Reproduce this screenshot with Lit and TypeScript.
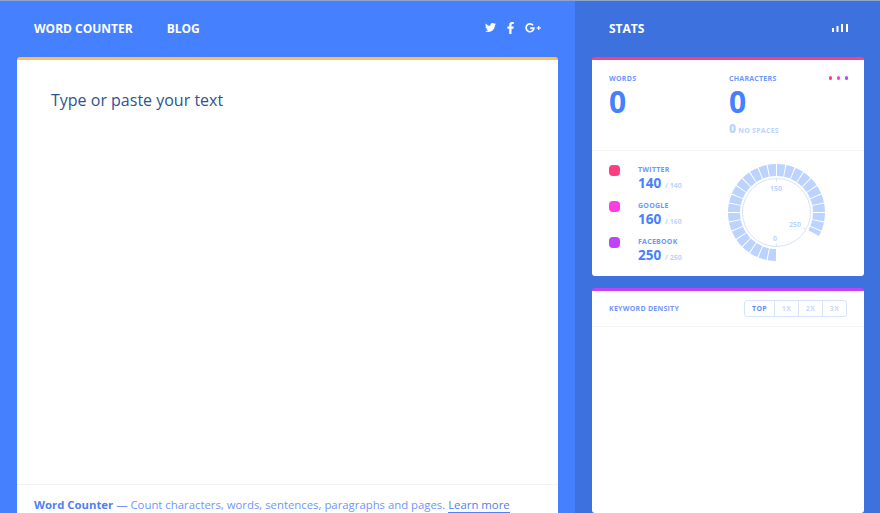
import { LitElement, html, css, svg } from "lit";
import { customElement } from "lit/decorators.js";

const CX = 48.5, CY = 48.5;
function pt(r: number, deg: number) {
  const a = (deg * Math.PI) / 180;
  return `${(CX + r * Math.sin(a)).toFixed(2)} ${(CY - r * Math.cos(a)).toFixed(2)}`;
}
const segs = Array.from({ length: 27 }, (_, i) => {
  const a = 180 + i * 11.25 + 0.65;
  const b = Math.min(180 + (i + 1) * 11.25 - 0.65, 479);
  return `M${pt(48.5, a)}A48.5 48.5 0 0 1 ${pt(48.5, b)}L${pt(36.5, b)}A36.5 36.5 0 0 0 ${pt(36.5, a)}Z`;
});

@customElement("app-root")
export class AppRoot extends LitElement {
  static styles = css`
    :host { display: block; height: 100vh; overflow: hidden; font-family: "Open Sans", sans-serif; }
    .page { display: grid; grid-template-columns: 575px 305px; height: 513px; overflow: hidden; border-top: 1px solid #8fa5cc; box-sizing: border-box; }
    .left { background: #4580ff; padding: 0 17px; display: flex; flex-direction: column; }
    .right { background: #3d72de; padding: 0 16px 0 17px; display: flex; flex-direction: column; }
    .nav { height: 56px; flex: none; display: flex; align-items: center; padding: 0 17px; color: #fff; font-weight: 700; font-size: 12px; box-sizing: border-box; padding-bottom: 2px; }
    .nav .blog { margin-left: 34px; }
    .social { margin-left: auto; display: flex; align-items: center; gap: 11px; }
    .social svg { display: block; fill: #fff; }
    .editor { flex: 1; background: #fff; border-top: 3px solid #ffc04d; border-radius: 3px 3px 0 0; display: flex; flex-direction: column; min-height: 0; }
    .prompt { flex: 1; padding: 29px 34px 0; font-size: 16px; line-height: 22px; color: #2c5490; }
    .foot { flex: none; height: 17px; border-top: 1px solid #f1f3f7; padding: 11px 17px 0; font-size: 11.35px; line-height: 18px; color: #6f96ff; white-space: nowrap; }
    .foot b { color: #4f80f5; font-weight: 700; }
    .foot a { color: #4f80f5; text-decoration: none; border-bottom: 1px solid #4f80f5; }
    .stats-head svg { margin-left: auto; display: block; fill: #fff; }
    .stats-head { padding: 0 16px 2px 17px; }
    .card { background: #fff; border-radius: 3px; border-top: 3px solid #ff3d80; }
    .top { height: 76px; position: relative; display: grid; grid-template-columns: 120px 1fr; padding: 14px 17px 0; box-sizing: content-box; border-bottom: 1px solid #f3f5f9; }
    .label { font-size: 7px; line-height: 10px; font-weight: 700; letter-spacing: 0.25px; color: #6f96ff; text-transform: uppercase; }
    .big { font-size: 30px; line-height: 36px; font-weight: 700; color: #4580ff; }
    .nospace { margin-top: 2px; font-size: 7px; line-height: 14px; font-weight: 700; letter-spacing: 0.25px; color: #bcd3ff; display: flex; align-items: baseline; gap: 2px; }
    .nospace b { font-size: 12px; }
    .dots { position: absolute; top: 16px; right: 16px; display: flex; gap: 4.5px; }
    .dots i { width: 3.500px; height: 3.500px; border-radius: 50%; }
    .mid { height: 125px; display: flex; box-sizing: border-box; padding: 14px 16px 0 17px; }
    .legend { width: 119px; flex: none; display: flex; flex-direction: column; gap: 6px; }
    .row { display: flex; height: 30px; }
    .swatch { width: 11px; height: 11px; border-radius: 4px; margin: 0 18px 0 0; flex: none; }
    .row .val { font-size: 13.5px; line-height: 18px; font-weight: 700; color: #4580ff; white-space: nowrap; margin-top: -1px; }
    .row .val small { font-size: 7px; color: #bcd3ff; margin-left: 2px; font-weight: 700; }
    .gauge { display: block; margin-top: -1px; }
    .gauge text { font-size: 7px; font-weight: 700; fill: #bcd3ff; text-anchor: middle; }
    .second { margin-top: 12px; flex: 1; border-top-color: #c044f5; }
    .kd { height: 36px; box-sizing: border-box; display: flex; align-items: center; justify-content: space-between; padding: 0 17px; border-bottom: 1px solid #f3f5f9; }
    .tabs { display: flex; border: 1px solid #d5e3ff; border-radius: 3px; height: 15px; }
    .tabs span { font-size: 7px; line-height: 15px; font-weight: 700; letter-spacing: .3px; color: #c6d9ff; width: 23px; text-align: center; border-left: 1px solid #d5e3ff; }
    .tabs span:first-child { border-left: 0; width: 29px; color: #5f8df5; }
  `;

  render() {
    const rows = [
      ["TWITTER", "140", "140", "#ff3d80"],
      ["GOOGLE", "160", "160", "#ff3de0"],
      ["FACEBOOK", "250", "250", "#c044f5"],
    ];
    return html`<div class="page">
      <section class="left">
        <nav class="nav">
          <span>WORD COUNTER</span><span class="blog">BLOG</span>
          <span class="social">
            <svg width="11" height="10" viewBox="0 0 24 21"><path transform="translate(0 -2.500)" d="M23.953 4.57a10 10 0 01-2.825.775 4.958 4.958 0 002.163-2.723c-.951.555-2.005.959-3.127 1.184a4.92 4.92 0 00-8.384 4.482C7.69 8.095 4.067 6.13 1.64 3.162a4.822 4.822 0 00-.666 2.475c0 1.71.87 3.213 2.188 4.096a4.904 4.904 0 01-2.228-.616v.06a4.923 4.923 0 003.946 4.827 4.996 4.996 0 01-2.212.085 4.936 4.936 0 004.604 3.417 9.867 9.867 0 01-6.102 2.105c-.39 0-.779-.023-1.17-.067a13.995 13.995 0 007.557 2.209c9.053 0 13.998-7.496 13.998-13.985 0-.21 0-.42-.015-.63A9.935 9.935 0 0024 4.59z"/></svg>
            <svg width="7" height="12" viewBox="0 0 14 24"><path d="M13.500 4.200h-2.600C9.600 4.200 9 4.800 9 6v3h4.400l-.6 4.400H9V24H4.500V13.400H.7V9h3.800V5.600C4.500 2 6.800 0 10 0c1.500 0 2.800.1 3.500.2z"/></svg>
            <svg width="16" height="10" viewBox="0 0 16 10"><path d="M8 2.300A3.900 3.900 0 1 0 8.900 5.200H5.200" fill="none" stroke="#fff" stroke-width="1.700"/><path d="M11.500 5h4.500M13.750 2.900v4.200" fill="none" stroke="#fff" stroke-width="1.200"/></svg>
          </span>
        </nav>
        <div class="editor">
          <div class="prompt">Type or paste your text</div>
          <div class="foot"><b>Word Counter</b> — Count characters, words, sentences, paragraphs and pages. <a>Learn more</a></div>
        </div>
      </section>
      <section class="right">
        <nav class="nav stats-head">
          <span>STATS</span>
          <svg width="16" height="8" viewBox="0 0 16 8"><rect x="0" y="4" width="2" height="4"/><rect x="4.500" y="2" width="2" height="6"/><rect x="9" y="0" width="2" height="8"/><rect x="14" y="0" width="2" height="8"/></svg>
        </nav>
        <div class="card">
          <div class="top">
            <div>
              <div class="label">Words</div>
              <div class="big">0</div>
            </div>
            <div>
              <div class="label">Characters</div>
              <div class="big">0</div>
              <div class="nospace"><b>0</b> NO SPACES</div>
            </div>
            <div class="dots">
              <i style="background:#ff3d80"></i><i style="background:#ff3de0"></i><i style="background:#c044f5"></i>
            </div>
          </div>
          <div class="mid">
            <div class="legend">
              ${rows.map(
                (r) => html`<div class="row">
                  <i class="swatch" style="background:${r[3]}"></i>
                  <div><div class="label">${r[0]}</div><div class="val">${r[1]}<small> / ${r[2]}</small></div></div>
                </div>`
              )}
            </div>
            <svg class="gauge" width="97" height="97" viewBox="0 0 97 97">
              ${segs.map((d) => svg`<path d=${d} fill="#bcd3ff"/>`)}
              <circle cx="48.5" cy="48.5" r="34" fill="none" stroke="#d5e3ff" stroke-width="1"/>
              <path d="M48.500 14.500v3M48.500 82.500v-3M78 65.500l-3-1.700" stroke="#d5e3ff" stroke-width="1" fill="none"/>
              <text x="48" y="27">150</text>
              <text x="67" y="63">250</text>
              <text x="47" y="77">0</text>
            </svg>
          </div>
        </div>
        <div class="card second">
          <div class="kd">
            <span class="label">Keyword density</span>
            <div class="tabs"><span>TOP</span><span>1X</span><span>2X</span><span>3X</span></div>
          </div>
        </div>
      </section>
    </div>`;
  }
}
